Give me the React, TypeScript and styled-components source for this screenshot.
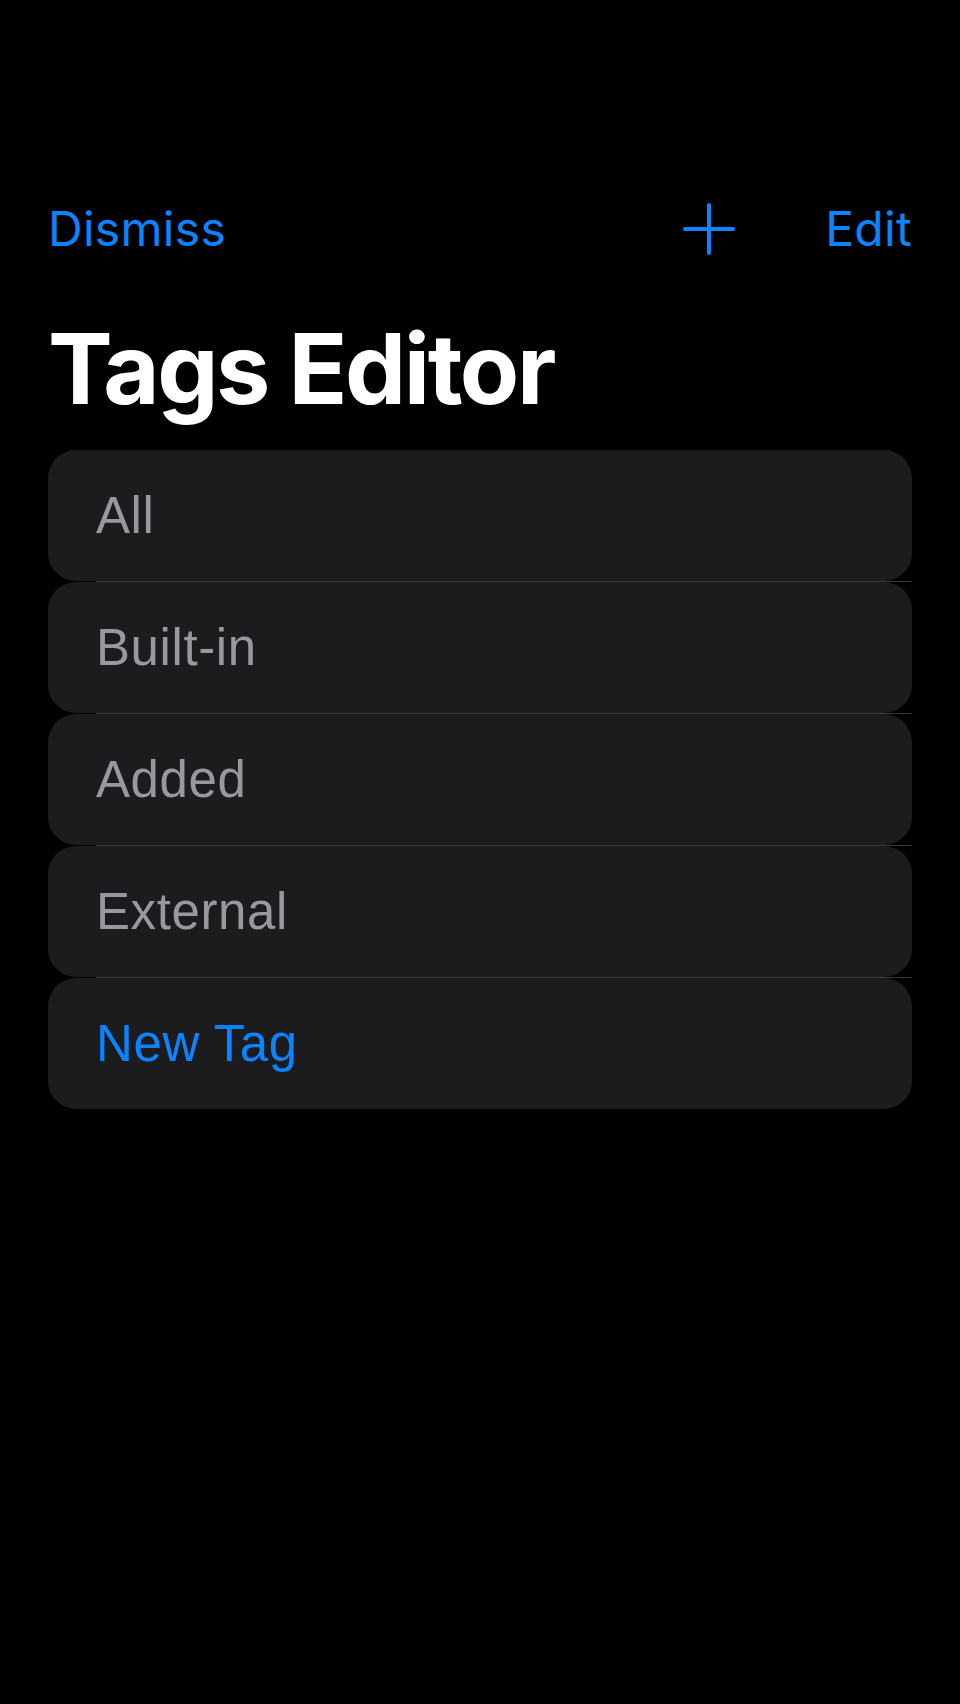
import React from "react";
import styled, { createGlobalStyle } from "styled-components";

const GlobalStyle = createGlobalStyle`
  html, body {
    margin: 0;
    padding: 0;
    background: #000000;
  }
  body {
    font-family: Inter, "Liberation Sans", sans-serif;
    -webkit-font-smoothing: antialiased;
  }
`;

const Page = styled.div`
  min-height: 1704px;
  background: #000000;
  padding: 200px 48px 0 48px;
  box-sizing: border-box;
  display: flex;
  flex-direction: column;
`;

const NavBar = styled.div`
  display: flex;
  align-items: center;
  justify-content: space-between;
  height: 58px;
`;

const NavButton = styled.button`
  background: none;
  border: none;
  padding: 0;
  margin: 0;
  color: #0a84ff;
  font-family: Inter, "Liberation Sans", sans-serif;
  font-size: 48px;
  font-weight: 400;
  line-height: 58px;
  letter-spacing: 0.3px;
  cursor: pointer;
`;

const NavRight = styled.div`
  display: flex;
  align-items: center;
  gap: 90px;
`;

const IconButton = styled.button`
  background: none;
  border: none;
  padding: 0;
  margin: 0;
  width: 52px;
  height: 52px;
  display: flex;
  align-items: center;
  justify-content: center;
  cursor: pointer;
`;

const Title = styled.h1`
  margin: 52px 0 0 0;
  color: #ffffff;
  font-family: Inter, "Liberation Sans", sans-serif;
  font-size: 97px;
  font-weight: 700;
  line-height: 118px;
  letter-spacing: -2.4px;
`;

const List = styled.div`
  margin-top: 22px;
  display: flex;
  flex-direction: column;
`;

const Row = styled.div`
  height: 131px;
  background: #1c1c1e;
  border-radius: 28px;
  display: flex;
  align-items: center;
  padding-left: 48px;
  box-sizing: border-box;
`;

const RowLabel = styled.span<{ $accent?: boolean }>`
  font-family: "Liberation Sans", Arial, sans-serif;
  font-size: 51px;
  line-height: 60px;
  color: ${(p) => (p.$accent ? "#0a84ff" : "#98989e")};
  letter-spacing: 0.6px;
`;

const Separator = styled.div`
  height: 1px;
  margin-left: 48px;
  background: #3a3a3c;
`;

const PlusIcon = () => (
  <svg width="52" height="52" viewBox="0 0 52 52" fill="none">
    <path
      d="M26 2 V50 M2 26 H50"
      stroke="#0a84ff"
      strokeWidth="4"
      strokeLinecap="round"
    />
  </svg>
);

const tags: { label: string; accent?: boolean }[] = [
  { label: "All" },
  { label: "Built-in" },
  { label: "Added" },
  { label: "External" },
  { label: "New Tag", accent: true },
];

export default function App() {
  return (
    <>
      <GlobalStyle />
      <Page>
        <NavBar>
          <NavButton>Dismiss</NavButton>
          <NavRight>
            <IconButton aria-label="Add">
              <PlusIcon />
            </IconButton>
            <NavButton>Edit</NavButton>
          </NavRight>
        </NavBar>
        <Title>Tags Editor</Title>
        <List>
          {tags.map((t, i) => (
            <React.Fragment key={t.label}>
              {i > 0 && <Separator />}
              <Row>
                <RowLabel $accent={t.accent}>{t.label}</RowLabel>
              </Row>
            </React.Fragment>
          ))}
        </List>
      </Page>
    </>
  );
}
